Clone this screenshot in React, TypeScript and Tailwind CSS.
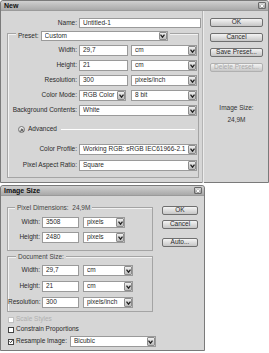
import React from 'react';

const Arrow = () => (
  <span className="flex h-full w-[8px] shrink-0 items-center justify-center rounded-[1px] border border-[#8c8c8c] bg-gradient-to-b from-[#f0f0f0] to-[#bcbcbc]">
    <svg width="5" height="4" viewBox="0 0 5 4">
      <path d="M0.5 0.6 L2.5 3.2 L4.5 0.6" fill="none" stroke="#222" strokeWidth="1.3" />
    </svg>
  </span>
);

const Field: React.FC<{ w: string; value: string; select?: boolean; h?: string }> = ({ w, value, select, h = 'h-[11px]' }) => (
  <div className={`flex ${h} ${w} shrink-0 items-center border border-[#9a9a9a] bg-white pl-[3px]`}>
    <span className="flex-1 truncate leading-none text-[#2a2a2a]">{value}</span>
    {select && <Arrow />}
  </div>
);

const Btn: React.FC<{ label: string; disabled?: boolean; w?: string }> = ({ label, disabled, w = 'w-[53px]' }) => (
  <div
    className={`flex h-[9px] ${w} items-center justify-center rounded-[2px] border border-[#6f6f6f] bg-gradient-to-b from-[#f4f4f4] to-[#c6c6c6] leading-none ${
      disabled ? 'border-[#b0b0b0] text-[#a8a8a8]' : 'text-[#2a2a2a]'
    }`}
  >
    {label}
  </div>
);

const Close = () => (
  <div className="flex h-[7px] w-[8px] items-center justify-center rounded-[1px] border border-[#6a6a6a] bg-gradient-to-b from-[#d8d8d8] to-[#9a9a9a]">
    <svg width="4" height="4" viewBox="0 0 4 4">
      <path d="M0.5 0.5 L3.5 3.5 M3.5 0.5 L0.5 3.5" stroke="#fff" strokeWidth="1" />
    </svg>
  </div>
);

const TitleBar: React.FC<{ title: string }> = ({ title }) => (
  <div className="flex h-[10px] items-center justify-between rounded-t-[3px] border-b border-[#9a9a9a] bg-gradient-to-b from-[#d0d0d0] to-[#a9a9a9] pl-[3px] pr-[2px]">
    <span className="text-[7px] font-bold leading-none text-[#111]">{title}</span>
    <Close />
  </div>
);

const Row: React.FC<{ label: string; lw: string; children: React.ReactNode }> = ({ label, lw, children }) => (
  <div className="flex h-[11px] items-center gap-[2px]">
    <span className={`${lw} shrink-0 whitespace-nowrap text-right leading-none text-[#2a2a2a]`}>{label}</span>
    {children}
  </div>
);

const Check: React.FC<{ checked?: boolean; disabled?: boolean }> = ({ checked, disabled }) => (
  <span
    className={`flex h-[6px] w-[6px] shrink-0 items-center justify-center border bg-white ${
      disabled ? 'border-[#c0c0c0]' : 'border-[#444]'
    }`}
  >
    {checked && (
      <svg width="5" height="5" viewBox="0 0 5 5">
        <path d="M0.6 2.4 L2 3.9 L4.5 0.8" fill="none" stroke="#111" strokeWidth="1" />
      </svg>
    )}
  </span>
);

export default function App() {
  return (
    <div className="h-[353px] w-[269px] overflow-hidden bg-white font-['Liberation_Sans',Arial,sans-serif] text-[6.5px]">
      {/* New dialog */}
      <div className="h-[183px] w-[269px] rounded-t-[3px] border border-[#7a7a7a] bg-[#d6d6d6]">
        <TitleBar title="New" />
        <div className="flex">
          <div className="w-[200px]">
            <div className="mt-[7px] flex h-[10px] items-center gap-[2px]">
              <span className="w-[76px] text-right leading-none text-[#2a2a2a]">Name:</span>
              <Field w="w-[122px]" value="Untitled-1" h="h-[10px]" />
            </div>

            <div className="ml-[6px] mt-[5px] h-[145px] w-[192px] border border-[#a4a4a4] shadow-[inset_1px_1px_0_#f2f2f2]">
              <div className="-mt-[3px] ml-[8px] flex w-fit items-center gap-[2px] bg-[#d6d6d6] px-[2px]">
                <span className="leading-none text-[#2a2a2a]">Preset:</span>
                <Field w="w-[127px]" value="Custom" select h="h-[10px]" />
              </div>

              <div className="mt-[4px] flex flex-col gap-[4px]">
                <Row label="Width:" lw="w-[69px]">
                  <Field w="w-[49px]" value="29,7" />
                  <Field w="w-[66px] ml-[1px]" value="cm" select />
                </Row>
                <Row label="Height:" lw="w-[69px]">
                  <Field w="w-[49px]" value="21" />
                  <Field w="w-[66px] ml-[1px]" value="cm" select />
                </Row>
                <Row label="Resolution:" lw="w-[69px]">
                  <Field w="w-[49px]" value="300" />
                  <Field w="w-[66px] ml-[1px]" value="pixels/inch" select />
                </Row>
                <Row label="Color Mode:" lw="w-[69px]">
                  <Field w="w-[47px]" value="RGB Color" select />
                  <Field w="w-[66px] ml-[3px]" value="8 bit" select />
                </Row>
                <Row label="Background Contents:" lw="w-[69px]">
                  <Field w="w-[118px]" value="White" select />
                </Row>
              </div>

              <div className="ml-[10px] mt-[10px] flex h-[7px] items-center">
                <span className="flex h-[7px] w-[7px] items-center justify-center rounded-full border border-[#777] bg-gradient-to-b from-[#f6f6f6] to-[#c4c4c4]">
                  <svg width="4" height="4" viewBox="0 0 4 4">
                    <path d="M0.6 2.2 L2 0.8 L3.4 2.2 M0.6 3.6 L2 2.2 L3.4 3.6" fill="none" stroke="#222" strokeWidth="0.8" />
                  </svg>
                </span>
                <span className="ml-[3px] leading-none text-[#2a2a2a]">Advanced</span>
                <span className="ml-[4px] h-px w-[134px] border-b border-white bg-[#a8a8a8]" />
              </div>

              <div className="mt-[11px] flex flex-col gap-[5px]">
                <Row label="Color Profile:" lw="w-[69px]">
                  <Field w="w-[118px]" value="Working RGB:  sRGB IEC61966-2.1" select />
                </Row>
                <Row label="Pixel Aspect Ratio:" lw="w-[69px]">
                  <Field w="w-[118px]" value="Square" select />
                </Row>
              </div>
            </div>
          </div>

          <div className="ml-[1px] h-[172px] w-[66px] border-l border-[#b4b4b4] pl-[7px] shadow-[inset_1px_0_0_#ececec]">
            <div className="mt-[7px] flex flex-col gap-[6px]">
              <Btn label="OK" />
              <Btn label="Cancel" />
              <Btn label="Save Preset..." />
              <Btn label="Delete Preset..." disabled />
            </div>
            <div className="mt-[33px] flex w-[53px] flex-col items-center gap-[5px] leading-none text-[#333]">
              <span>Image Size:</span>
              <span>24,9M</span>
            </div>
          </div>
        </div>
      </div>

      {/* Image Size dialog */}
      <div className="mt-[2px] h-[166px] w-[205px] rounded-t-[3px] border border-[#7a7a7a] bg-[#d6d6d6]">
        <TitleBar title="Image Size" />
        <div className="flex">
          <div className="w-[154px]">
            <div className="ml-[6px] mt-[11px] h-[44px] w-[146px] border border-[#a4a4a4] shadow-[inset_1px_1px_0_#f2f2f2]">
              <div className="-mt-[4px] ml-[7px] w-fit bg-[#d6d6d6] px-[2px] leading-[7px] text-[#444]">
                Pixel Dimensions:&nbsp;&nbsp;24,9M
              </div>
              <div className="mt-[6px] flex flex-col gap-[4px]">
                <Row label="Width:" lw="w-[32px]">
                  <Field w="w-[37px]" value="3508" />
                  <Field w="w-[42px] ml-[2px]" value="pixels" select />
                </Row>
                <Row label="Height:" lw="w-[32px]">
                  <Field w="w-[37px]" value="2480" />
                  <Field w="w-[42px] ml-[2px]" value="pixels" select />
                </Row>
              </div>
            </div>

            <div className="ml-[6px] mt-[5px] h-[56px] w-[146px] border border-[#a4a4a4] shadow-[inset_1px_1px_0_#f2f2f2]">
              <div className="-mt-[4px] ml-[8px] w-fit bg-[#d6d6d6] px-[2px] leading-[7px] text-[#444]">
                Document Size:
              </div>
              <div className="mt-[5px] flex flex-col gap-[5px]">
                <Row label="Width:" lw="w-[32px]">
                  <Field w="w-[37px]" value="29,7" />
                  <Field w="w-[50px] ml-[2px]" value="cm" select />
                </Row>
                <Row label="Height:" lw="w-[32px]">
                  <Field w="w-[37px]" value="21" />
                  <Field w="w-[50px] ml-[2px]" value="cm" select />
                </Row>
                <Row label="Resolution:" lw="w-[32px]">
                  <Field w="w-[37px]" value="300" />
                  <Field w="w-[50px] ml-[2px]" value="pixels/inch" select />
                </Row>
              </div>
            </div>

            <div className="ml-[7px] mt-[4px] flex flex-col gap-[3px] leading-none">
              <div className="flex h-[7px] items-center gap-[2px] text-[#b0b0b0]">
                <Check disabled />
                <span>Scale Styles</span>
              </div>
              <div className="flex h-[7px] items-center gap-[2px] text-[#2a2a2a]">
                <Check />
                <span>Constrain Proportions</span>
              </div>
              <div className="flex h-[11px] items-center gap-[2px] text-[#2a2a2a]">
                <Check checked />
                <span className="whitespace-nowrap">Resample Image:</span>
                <Field w="w-[86px] ml-[1px]" value="Bicubic" select />
              </div>
            </div>
          </div>

          <div className="ml-[7px] mt-[10px] flex flex-col">
            <Btn label="OK" w="w-[36px]" />
            <div className="mt-[5px]">
              <Btn label="Cancel" w="w-[36px]" />
            </div>
            <div className="mt-[9px]">
              <Btn label="Auto..." w="w-[36px]" />
            </div>
          </div>
        </div>
      </div>
    </div>
  );
}
